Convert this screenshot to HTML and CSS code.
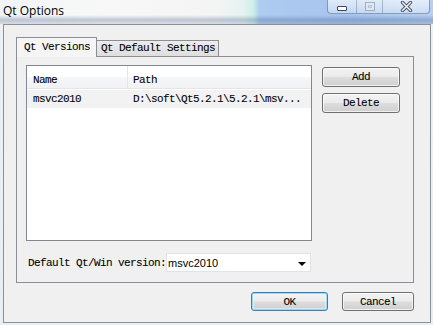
FILE: index.html
```html
<!DOCTYPE html>
<html>
<head>
<meta charset="utf-8">
<link rel="stylesheet" href="styles.css">
</head>
<body>
<div class="window">
  <div class="titlebar">
    <span class="title">Qt Options</span>
    <div class="caption">
      <span class="cb cb-min"><i class="min-glyph"></i></span>
      <span class="cb cb-max"><i class="max-glyph"></i></span>
      <span class="cb cb-close">
        <svg width="13" height="11" viewBox="0 0 13 11">
          <path d="M2.5 1.5 L10.5 9.5 M10.5 1.5 L2.5 9.5" stroke="#4a5564" stroke-width="3.4" stroke-linecap="round"/>
          <path d="M2.5 1.5 L10.5 9.5 M10.5 1.5 L2.5 9.5" stroke="#eef1f4" stroke-width="1.5" stroke-linecap="round"/>
        </svg>
      </span>
    </div>
  </div>
  <div class="client">
    <div class="tabwidget">
      <div class="tabbar">
        <div class="tab tab-active mono">Qt Versions</div>
        <div class="tab mono">Qt Default Settings</div>
      </div>
      <div class="pane">
        <div class="pane-top">
          <div class="tree">
            <div class="tree-header mono">
              <div class="col col-name">Name</div>
              <div class="col col-path">Path</div>
            </div>
            <div class="tree-row mono">
              <div class="col col-name">msvc2010</div>
              <div class="col col-path">D:\soft\Qt5.2.1\5.2.1\msv...</div>
            </div>
          </div>
          <div class="side">
            <button class="btn btn-side mono">Add</button>
            <button class="btn btn-side mono">Delete</button>
          </div>
        </div>
        <div class="combo-row">
          <span class="mono label">Default Qt/Win version:</span>
          <div class="combo">
            <span class="combo-text">msvc2010</span>
            <span class="combo-arrow"></span>
          </div>
        </div>
      </div>
    </div>
    <div class="footer">
      <button class="btn btn-ok mono">OK</button>
      <button class="btn btn-cancel mono">Cancel</button>
    </div>
  </div>
</div>
</body>
</html>
```

FILE: styles.css
```css
* { box-sizing: border-box; }
html, body { margin: 0; padding: 0; }
body { width: 433px; height: 325px; overflow: hidden; background: #eef2f5; }

.window {
  width: 433px;
  height: 325px;
  background: linear-gradient(to bottom, #eef1f4, #e9eef2);
  display: flex;
  flex-direction: column;
}

.titlebar {
  height: 24px;
  display: flex;
  align-items: flex-start;
  background:
    linear-gradient(to bottom, rgba(0,0,0,0) 0, rgba(0,0,0,0) 15px, rgba(60,85,130,0.30) 20px, rgba(60,85,130,0.15) 24px),
    linear-gradient(to right, #f2f4f5 0, #f8f8f8 25%, #f4f4f4 50%, #e6f3f1 56%, #cdeeea 58.5%, #aecbf0 60%, #a6c5ee 80%, #b6d0f1 100%);
}

.title {
  font-family: "Open Sans", "Noto Sans", sans-serif;
  font-size: 12px;
  color: #000;
  line-height: 16px;
  padding: 3px 0 0 3px;
}

.caption {
  margin-left: auto;
  margin-right: 3px;
  display: flex;
  height: 14px;
  border: 1px solid rgba(70,90,120,0.55);
  border-top: none;
  border-radius: 0 0 4px 4px;
  background: linear-gradient(to bottom, rgba(255,255,255,0.65), rgba(225,235,247,0.5));
  overflow: hidden;
}

.cb {
  display: flex;
  align-items: center;
  justify-content: center;
  height: 13px;
}
.cb-min { width: 29px; border-right: 1px solid rgba(70,90,120,0.35); }
.cb-max { width: 26px; border-right: 1px solid rgba(70,90,120,0.35); }
.cb-close { width: 46px; }

.min-glyph {
  display: block;
  width: 10px;
  height: 5px;
  margin-top: 4px;
  background: #fff;
  border: 1px solid #3d4a5a;
  border-radius: 1px;
}
.max-glyph {
  display: block;
  width: 10px;
  height: 9px;
  border: 1px solid rgba(90,110,140,0.45);
  box-shadow: inset 0 0 0 2px rgba(255,255,255,0.6), inset 0 0 0 3px rgba(90,110,140,0.25);
}

.client {
  margin: 0 2px 0 3px;
  height: 299px;
  border: 1px solid #8a9096;
  background: #f0f0f0;
  padding: 12px 16px 0 12px;
  display: flex;
  flex-direction: column;
}

.mono {
  font-family: "Liberation Mono", "DejaVu Sans Mono", monospace;
  font-size: 11px;
  letter-spacing: -0.6px;
  color: #000;
  -webkit-text-stroke: 0.08px #000;
}

.tabbar {
  display: flex;
  align-items: flex-end;
  height: 19px;
  position: relative;
  z-index: 1;
}

.tab {
  height: 16px;
  line-height: 15px;
  padding: 0 3px 0 4px;
  border: 1px solid #8c8e94;
  border-bottom: none;
  background: linear-gradient(to bottom, #ececec, #dedede);
  white-space: nowrap;
}

.tab-active {
  height: 20px;
  margin-bottom: -1px;
  line-height: 19px;
  padding: 0 7px 0 7px;
  width: 81px;
  background: #f5f5f5;
  border-color: #8c8e94;
}

.tab-active + .tab { border-left: none; }

.pane {
  width: 398px;
  height: 227px;
  border: 1px solid #8c8e94;
  background: #f0f0f0;
  padding: 8px 0 0 9px;
  display: flex;
  flex-direction: column;
}

.pane-top {
  display: flex;
  align-items: flex-start;
}

.tree {
  width: 286px;
  height: 176px;
  border: 1px solid #828790;
  background: #fff;
}

.tree-header {
  height: 23px;
  display: flex;
  align-items: stretch;
  background: linear-gradient(to bottom, #ffffff 0, #ffffff 50%, #f6f7f8 51%, #f1f2f3 100%);
  border-bottom: 1px solid #e3e5e8;
}

.tree-header .col {
  line-height: 22px;
  padding-top: 3px;
}
.tree-header .col-name { border-right: 1px solid #e3e5e8; }

.col { white-space: nowrap; overflow: hidden; }
.col-name { width: 101px; padding-left: 6px; flex: none; }
.col-path { padding-left: 5px; }

.tree-row {
  height: 18px;
  display: flex;
  align-items: center;
  margin-top: 1px;
  background: #f2f2f2;
}

.side {
  margin-left: 10px;
  margin-top: 2px;
  display: flex;
  flex-direction: column;
  gap: 6px;
}

.btn {
  display: block;
  margin: 0;
  padding: 0;
  height: 20px;
  border: 1px solid #707070;
  border-radius: 3px;
  background: linear-gradient(to bottom, #f3f3f3 0, #ebebeb 48%, #dddddd 52%, #cfcfcf 100%);
  box-shadow: inset 0 0 0 1px rgba(255,255,255,0.7);
  text-align: center;
  line-height: 17px;
}

.btn-side { width: 78px; }

.combo-row {
  margin-top: 12px;
  display: flex;
  align-items: center;
  padding-left: 2px;
}

.label { width: 138px; white-space: nowrap; }

.combo {
  width: 145px;
  height: 19px;
  background: #fff;
  border: 1px solid #e2e3e6;
  display: flex;
  align-items: center;
  padding-left: 1px;
}

.combo-text {
  font-family: "Liberation Sans", Arial, sans-serif;
  font-size: 11px;
  color: #000;
}

.combo-arrow {
  margin-left: auto;
  margin-right: 4px;
  margin-top: 2px;
  width: 0;
  height: 0;
  border-left: 4px solid transparent;
  border-right: 4px solid transparent;
  border-top: 4px solid #000;
}

.footer {
  display: flex;
  justify-content: flex-end;
  gap: 14px;
  margin-top: 9px;
}

.footer .btn { height: 19px; line-height: 16px; }

.btn-ok {
  width: 77px;
  border-color: #3c7fb1;
  box-shadow: inset 0 0 0 1px #98d8f4, inset 0 0 0 2px rgba(255,255,255,0.4);
}

.btn-cancel { width: 72px; }
```
